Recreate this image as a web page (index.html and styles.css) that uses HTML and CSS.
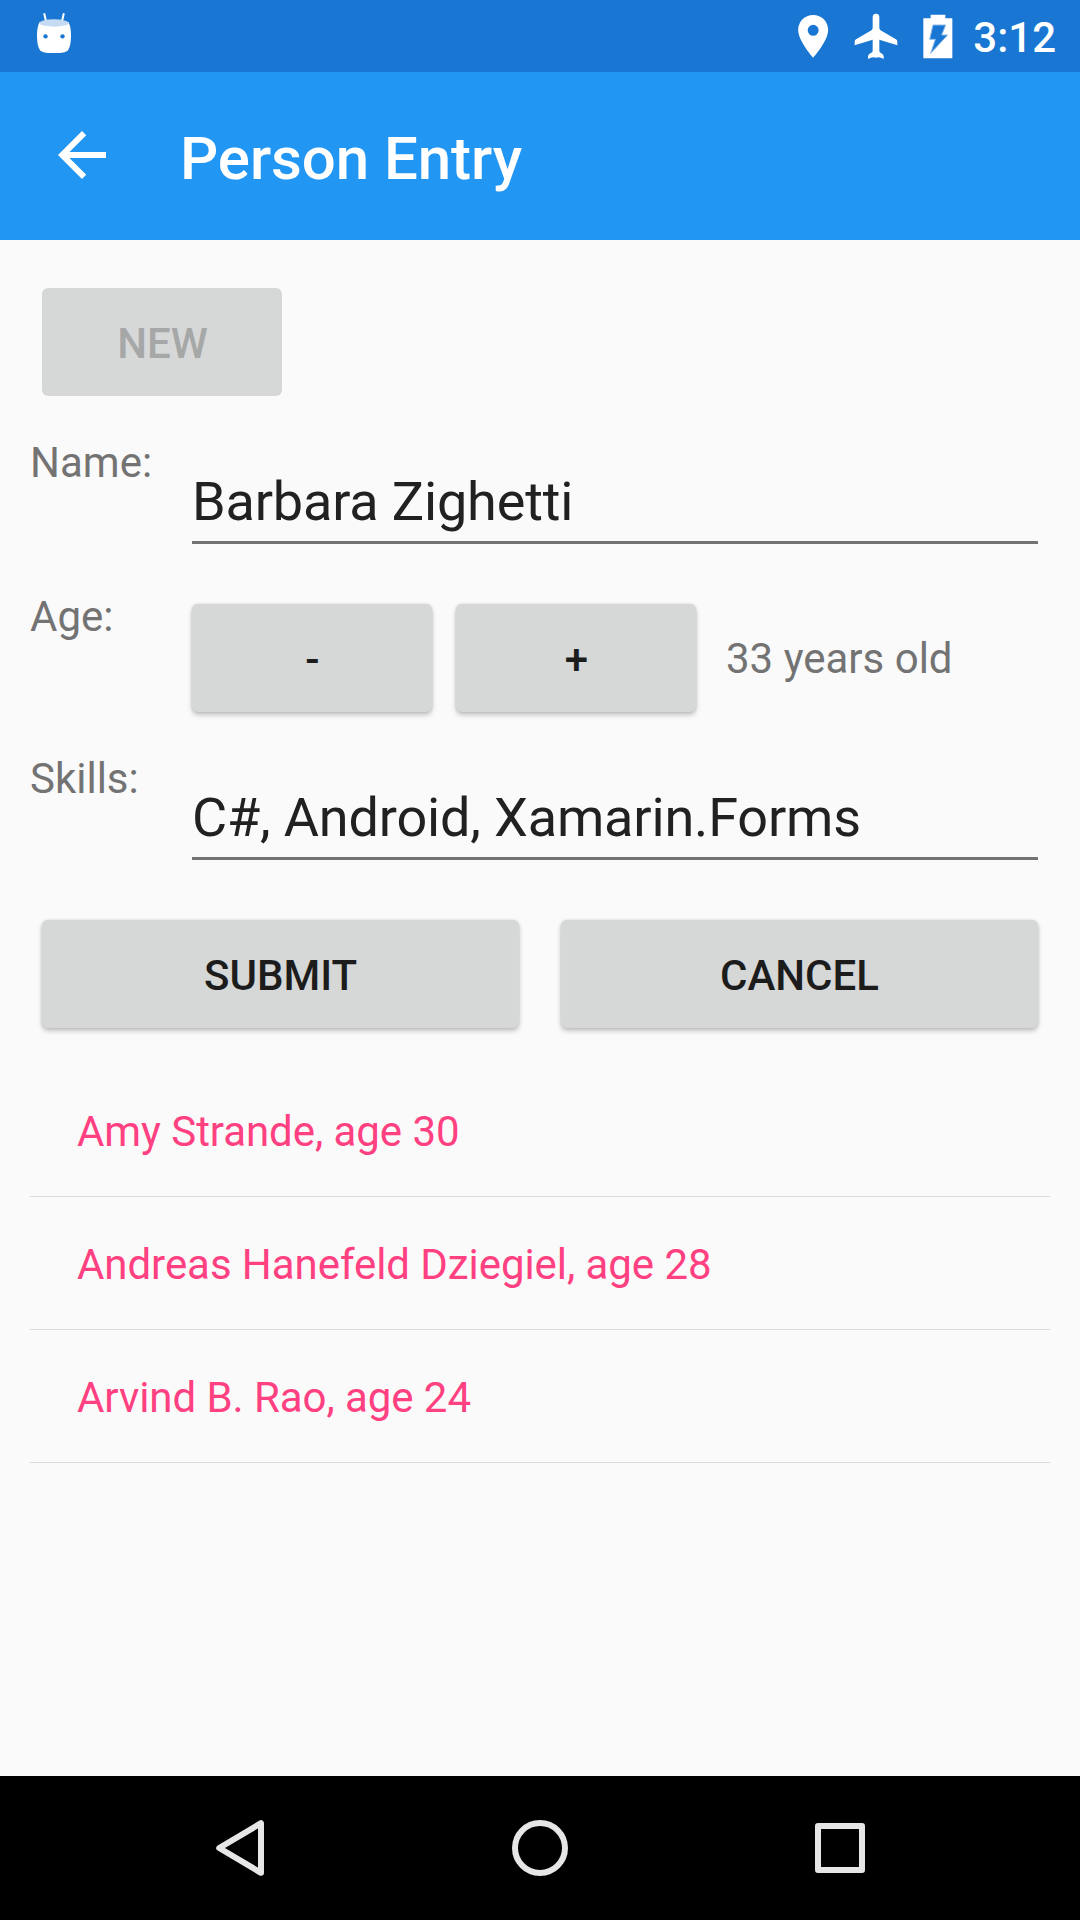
FILE: index.html
```
<!DOCTYPE html>
<html lang="en">
<head>
<meta charset="utf-8">
<title>Person Entry</title>
<link rel="stylesheet" href="styles.css">
</head>
<body>
<div class="screen">
  <header class="status-bar">
    <svg class="debug-icon" width="36" height="42" viewBox="0 0 108 126">
      <path class="antenna" d="M25 9l5 22M83 9l-5 22"/>
      <path fill="#fff" d="M11 33Q3 45 3 73Q3 108 13 119Q24 127 54 127Q84 127 95 119Q105 108 105 73Q105 45 97 33Z"/>
      <ellipse cx="54" cy="36" rx="44" ry="11" fill="#c5dbf3"/>
      <circle cx="28.500" cy="76" r="6.500" fill="#1976d2"/>
      <circle cx="79.500" cy="76" r="6.500" fill="#1976d2"/>
    </svg>
    <div class="status-right">
      <svg class="place-icon" width="32" height="45" viewBox="52 42 96 135">
        <path fill="#fff" fill-rule="evenodd" d="M100.500 45C75 45 55.500 65 55.500 90C55.500 123 100.500 173 100.500 173S145.500 123 145.500 90C145.500 65 126 45 100.500 45ZM100.500 74.500a16.500 16.500 0 1 1 0 33a16.500 16.500 0 1 1 0-33Z"/>
      </svg>
      <svg class="plane-icon" width="44" height="46" viewBox="224 38 132 138">
        <path fill="#fff" d="M280 50Q280 40 290 40Q300 40 300 50V84Q301 89 306 91L350 117Q354 120 354 124V135L300 118V151Q300 156 305 158Q313 162 313 168V176Q302 169 290 172Q278 169 266 176V168Q266 162 274 158Q280 156 280 151V118L226 135V124Q226 120 230 117L274 91Q279 89 280 84Z"/>
      </svg>
      <svg class="battery-icon" width="30" height="45" viewBox="428 41 90 135">
        <path fill="#fff" d="M451 43H495V54H516V174H429V54H451Z"/>
        <path fill="#1976d2" stroke="#8fbce9" stroke-width="3" d="M458 74H496L484 104H502L451 159L465 117H448Z"/>
      </svg>
      <span class="clock">3:12</span>
    </div>
  </header>

  <div class="app-bar">
    <svg class="back-icon" width="72" height="72" viewBox="0 0 24 24"><path fill="#fff" d="M20 11H7.830l5.590-5.590L12 4l-8 8 8 8 1.410-1.410L7.830 13H20v-2z"/></svg>
    <h1 class="title">Person Entry</h1>
  </div>

  <main class="content">
    <div class="button button-new">NEW</div>
    <div class="row row-name">
      <span class="label">Name:</span>
      <div class="entry">Barbara Zighetti</div>
    </div>
    <div class="row row-age">
      <span class="label">Age:</span>
      <div class="stepper">
        <div class="button raised small">-</div>
        <div class="button raised small">+</div>
        <span class="label age-text">33 years old</span>
      </div>
    </div>
    <div class="row row-skills">
      <span class="label">Skills:</span>
      <div class="entry">C#, Android, Xamarin.Forms</div>
    </div>
    <div class="actions">
      <div class="button raised">SUBMIT</div>
      <div class="button raised">CANCEL</div>
    </div>
    <ul class="people">
      <li class="person">Amy Strande, age 30</li>
      <li class="person">Andreas Hanefeld Dziegiel, age 28</li>
      <li class="person">Arvind B. Rao, age 24</li>
    </ul>
  </main>

  <nav class="nav-bar">
    <svg width="60" height="60" viewBox="0 0 60 60"><path class="nav-shape" d="M51 5.200V54.800L9.200 30Z"/></svg>
    <svg width="60" height="60" viewBox="0 0 60 60"><circle class="nav-shape" cx="30" cy="30" r="25"/></svg>
    <svg width="60" height="60" viewBox="0 0 60 60"><rect class="nav-shape" x="8" y="8" width="44" height="44"/></svg>
  </nav>
</div>
</body>
</html>
```
FILE: styles.css
```
* {
  box-sizing: border-box;
}

body {
  margin: 0;
  font-family: Roboto, sans-serif;
}

svg {
  display: block;
  flex: none;
}

.screen {
  display: flex;
  flex-direction: column;
  width: 1080px;
  height: 1920px;
  overflow: hidden;
  background: #fafafa;
}

.status-bar {
  display: flex;
  justify-content: space-between;
  height: 72px;
  padding: 0 24px 0 36px;
  background: #1976d2;
}

.debug-icon {
  margin-top: 11px;
}

.antenna {
  fill: none;
  stroke: #fff;
  stroke-width: 6;
  stroke-linecap: round;
}

.status-right {
  display: flex;
  align-items: flex-start;
}

.place-icon {
  margin-top: 14px;
  margin-right: 25px;
}

.plane-icon {
  margin-top: 13px;
  margin-right: 25px;
}

.battery-icon {
  margin-top: 14px;
  margin-right: 20px;
}

.clock {
  margin-top: 13px;
  color: #fff;
  font-size: 42px;
  font-weight: 500;
  line-height: 50px;
}

.app-bar {
  display: flex;
  height: 168px;
  padding-left: 46px;
  background: #2196f3;
}

.back-icon {
  margin-top: 47px;
}

.title {
  margin: 52px 0 0 62px;
  color: #fff;
  font-size: 60px;
  font-weight: 500;
  letter-spacing: -0.08px;
  line-height: 70px;
}

.content {
  flex: 1;
  padding: 48px 30px 0;
}

.button {
  height: 108px;
  padding-top: 31px;
  border-radius: 6px;
  background: #d6d7d7;
  color: #1c1c1c;
  font-size: 42px;
  font-weight: 500;
  line-height: 50px;
  text-align: center;
}

.button-new {
  width: 240px;
  margin-left: 12px;
  padding-left: 1px;
  color: #a6a7a7;
}

.raised {
  box-shadow: 0 3px 5px rgba(0, 0, 0, 0.22), 0 0 3px rgba(0, 0, 0, 0.12);
}

.small {
  width: 240px;
  padding-left: 1px;
}

.row {
  display: grid;
  grid-template-columns: 162px 1fr;
  align-items: start;
  padding-right: 12px;
}

.row-name {
  margin-top: 42px;
}

.row-age {
  margin-top: 48px;
}

.row-skills {
  margin-top: 42px;
}

.label {
  color: #737373;
  font-size: 42px;
  line-height: 50px;
}

.entry {
  height: 74px;
  margin-top: 32px;
  border-bottom: 3px solid #737373;
  color: #212121;
  font-size: 54px;
  letter-spacing: -0.16px;
  line-height: 64px;
}

.stepper {
  display: flex;
  gap: 24px;
  margin-top: 12px;
}

.age-text {
  margin-top: 30px;
  margin-left: 6px;
}

.actions {
  display: grid;
  grid-template-columns: 1fr 1fr;
  gap: 42px;
  margin: 60px 12px 0;
}

.people {
  margin: 36px 0 0;
  padding: 0;
  list-style: none;
}

.person {
  height: 133px;
  padding: 43px 0 0 47px;
  border-bottom: 1px solid #dbdbdb;
  color: #ff4081;
  font-size: 42px;
  letter-spacing: -0.06px;
  line-height: 50px;
}

.nav-bar {
  display: flex;
  justify-content: space-between;
  align-items: center;
  height: 144px;
  padding: 0 210px;
  background: #000;
}

.nav-shape {
  fill: none;
  stroke: #e6e6e6;
  stroke-width: 6;
  stroke-linejoin: round;
}
```
